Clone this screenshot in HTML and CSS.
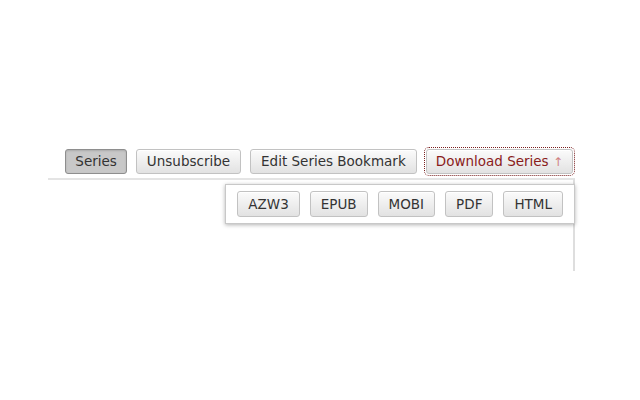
FILE: index.html
```html
<!DOCTYPE html>
<html lang="en">
<head>
    <meta charset="UTF-8">
    <title>Series</title>
    <link rel="stylesheet" href="styles.css">
</head>
<body>

<div class="page">
    <div class="toolbar">
        <button class="button active">Series</button>
        <button class="button">Unsubscribe</button>
        <button class="button">Edit Series Bookmark</button>
        <button class="button download">Download Series <span class="arrow">&uarr;</span></button>
    </div>

    <div class="panel">
        <div class="formats">
            <button class="button small">AZW3</button>
            <button class="button small">EPUB</button>
            <button class="button small">MOBI</button>
            <button class="button small">PDF</button>
            <button class="button small">HTML</button>
        </div>
    </div>
</div>

</body>
</html>
```

FILE: styles.css
```css
body {
    margin: 0;
    background: #fff;
    font-family: "DejaVu Sans", Verdana, sans-serif;
}

.page {
    width: 527px;
    margin-left: 48px;
    padding-top: 147px;
}

.toolbar {
    display: flex;
    justify-content: flex-end;
    align-items: center;
    gap: 9px;
    padding-right: 2px;
    height: 28px;
    margin-bottom: 3px;
}

.button {
    font-family: inherit;
    font-size: 13.5px;
    color: #333;
    height: 25px;
    padding: 0 10px;
    border: 1px solid #c2c2c2;
    border-radius: 3px;
    background: linear-gradient(#fbfbfb, #e2e2e2);
    box-shadow: inset 0 1px 0 #fff;
    cursor: pointer;
}

.button.active {
    background: #c8c8c8;
    border-color: #8e8e8e;
    box-shadow: inset 0 1px 2px rgba(0, 0, 0, 0.15);
    padding: 0 9px;
}

.button.download {
    color: #8a1c1c;
    outline: 1px dotted #7a2020;
    outline-offset: 1px;
    padding: 0 9px;
}

.arrow {
    color: #d08080;
    font-size: 12px;
}

.panel {
    border-top: 2px solid #e4e4e4;
    border-right: 2px solid #dedede;
    height: 87px;
    display: flex;
    justify-content: flex-end;
    align-items: flex-start;
    padding-top: 4px;
}

.formats {
    display: flex;
    gap: 10px;
    background: #fff;
    border: 1px solid #c8c8c8;
    box-shadow: 0 1px 4px rgba(0, 0, 0, 0.3);
    padding: 6px 11px 6px 11px;
    margin-right: -2px;
}

.button.small {
    height: 26px;
    padding: 0 10px;
}
```
